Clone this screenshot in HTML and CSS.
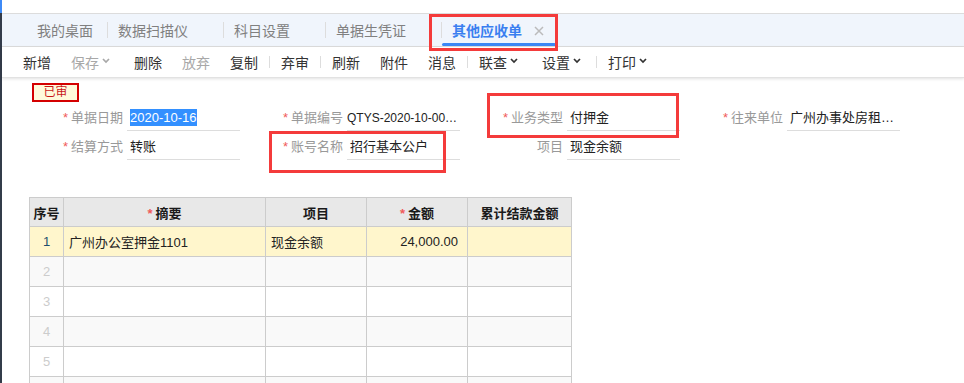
FILE: index.html
```html
<!DOCTYPE html>
<html>
  <head>
    <meta charset="utf-8" />
    <title>其他应收单</title>
    <link rel="stylesheet" href="styles.css">
  </head>
  <body>
    <div class="app">
      <div class="side"></div>
      <div class="main">
        <div class="topline"></div>

        <!-- onglets -->
        <div class="tabs">
          <div class="tab home">我的桌面</div>
          <span class="tab-sep"></span>
          <div class="tab">数据扫描仪<span class="close hidden"></span></div>
          <span class="tab-sep"></span>
          <div class="tab">科目设置<span class="close hidden"></span></div>
          <span class="tab-sep"></span>
          <div class="tab">单据生凭证<span class="close hidden"></span></div>
          <span class="tab-sep"></span>
          <div class="tab active">其他应收单<span class="close"><svg width="10" height="10" viewBox="0 0 10 10"><path d="M1 1l8 8M9 1l-8 8" /></svg></span></div>
        </div>

        <!-- barre d'outils -->
        <div class="toolbar">
          <span class="tool">新增</span>
          <span class="tool disabled drop">保存<svg width="8" height="6" viewBox="0 0 8 6"><path d="M1 1l3 3 3-3" /></svg></span>
          <span class="tool">删除</span>
          <span class="tool disabled">放弃</span>
          <span class="tool">复制</span>
          <span class="tool-sep"></span>
          <span class="tool">弃审</span>
          <span class="tool-sep"></span>
          <span class="tool">刷新</span>
          <span class="tool">附件</span>
          <span class="tool">消息</span>
          <span class="tool-sep"></span>
          <span class="tool drop">联查<svg width="8" height="6" viewBox="0 0 8 6"><path d="M1 1l3 3 3-3" /></svg></span>
          <span class="tool drop">设置<svg width="8" height="6" viewBox="0 0 8 6"><path d="M1 1l3 3 3-3" /></svg></span>
          <span class="tool-sep"></span>
          <span class="tool drop">打印<svg width="8" height="6" viewBox="0 0 8 6"><path d="M1 1l3 3 3-3" /></svg></span>
        </div>

        <div class="content">
          <div class="badge">已审</div>

          <div class="form">
            <div class="field">
              <label><i>*</i>单据日期</label>
              <div class="value"><span class="selected">2020-10-16</span></div>
            </div>
            <div class="field">
              <label><i>*</i>单据编号</label>
              <div class="value code">QTYS-2020-10-00…</div>
            </div>
            <div class="field">
              <label><i>*</i>业务类型</label>
              <div class="value">付押金</div>
            </div>
            <div class="field">
              <label><i>*</i>往来单位</label>
              <div class="value">广州办事处房租…</div>
            </div>
            <div class="field">
              <label><i>*</i>结算方式</label>
              <div class="value">转账</div>
            </div>
            <div class="field">
              <label><i>*</i>账号名称</label>
              <div class="value">招行基本公户</div>
            </div>
            <div class="field">
              <label>项目</label>
              <div class="value">现金余额</div>
            </div>
          </div>

          <table class="grid">
            <colgroup>
              <col style="width: 34px">
              <col style="width: 202px">
              <col style="width: 101px">
              <col style="width: 101px">
              <col style="width: 104px">
            </colgroup>
            <thead>
              <tr>
                <th>序号</th>
                <th><i>*</i>摘要</th>
                <th>项目</th>
                <th><i>*</i>金额</th>
                <th>累计结款金额</th>
              </tr>
            </thead>
            <tbody>
              <tr class="current">
                <td class="num">1</td>
                <td>广州办公室押金1101</td>
                <td>现金余额</td>
                <td class="amount">24,000.00</td>
                <td></td>
              </tr>
              <tr><td class="num">2</td><td></td><td></td><td></td><td></td></tr>
              <tr><td class="num">3</td><td></td><td></td><td></td><td></td></tr>
              <tr><td class="num">4</td><td></td><td></td><td></td><td></td></tr>
              <tr><td class="num">5</td><td></td><td></td><td></td><td></td></tr>
              <tr><td class="num"></td><td></td><td></td><td></td><td></td></tr>
            </tbody>
          </table>
        </div>
      </div>
    </div>

    <!-- cadres rouges d'annotation -->
    <div class="mark mark-tab"></div>
    <div class="mark mark-type"></div>
    <div class="mark mark-account"></div>
  </body>
</html>
```

FILE: styles.css
```css
html, body {
  margin: 0;
  height: 100%;
  overflow: hidden;
}

body {
  position: relative;
  background-color: #ffffff;
  font-family: "Liberation Sans", "Noto Sans CJK SC", sans-serif;
  color: #222;
}

.app {
  display: flex;
  height: 100%;
}

.side {
  width: 2px;
  flex: none;
  background: linear-gradient(#3d8af7 0, #3d8af7 13px, #333c4a 13px);
}

.main {
  flex: 1;
  min-width: 0;
}

.topline {
  height: 13px;
  border-bottom: 1px solid #dcdcdc;
}

/* onglets */
.tabs {
  display: flex;
  align-items: stretch;
  height: 32px;
  padding-left: 23px;
  background-color: #f0f5fc;
  border-bottom: 1px solid #dedede;
}

.tab {
  position: relative;
  display: flex;
  align-items: center;
  padding: 2px 13px 0 10px;
  font-size: 14px;
  line-height: 20px;
  color: #808080;
}

.tab.home {
  padding: 2px 14px 0 12px;
}

.tab.active {
  color: #3a7ff0;
  font-weight: bold;
  padding-right: 12px;
}

.tab.active::after {
  content: "";
  position: absolute;
  left: 0;
  right: 0;
  bottom: 0;
  height: 3px;
  border-radius: 2px;
  background-color: #3b87f5;
}

.close {
  display: flex;
  width: 10px;
  height: 10px;
  margin-left: 12px;
}

.close path {
  fill: none;
  stroke: #bbbbbb;
  stroke-width: 1.5;
}

.close.hidden {
  visibility: hidden;
}

.tab-sep {
  width: 1px;
  height: 16px;
  align-self: center;
  background-color: #dddddd;
}

/* barre d'outils */
.toolbar {
  display: flex;
  align-items: center;
  height: 30px;
  padding-left: 11px;
  box-shadow: 0 1px 3px rgba(0, 0, 0, 0.12);
  border-bottom: 1px solid #e2e2e2;
}

.tool {
  display: flex;
  align-items: center;
  padding: 0 10px;
  font-size: 14px;
  color: #333;
}

.tool.disabled {
  color: #a8a8a8;
}

.tool.drop {
  padding-right: 14px;
}

.tool svg {
  margin-left: 3px;
  margin-top: -2px;
}

.tool svg path {
  fill: none;
  stroke: currentColor;
  stroke-width: 1.7;
}

.tool-sep {
  width: 1px;
  height: 12px;
  margin: 0 1px;
  background-color: #dddddd;
}

/* contenu */
.content {
  padding-left: 27px;
}

.badge {
  width: 43px;
  height: 15px;
  margin: 5px 0 0 3px;
  border: 2px solid #d40000;
  background-color: #fffadb;
  color: #c81818;
  font-size: 12px;
  line-height: 15px;
  text-align: center;
}

.form {
  display: grid;
  grid-template-columns: repeat(4, 220px);
  row-gap: 4px;
  margin: 4px 0 0 -6px;
}

.field {
  display: flex;
  font-size: 13px;
}

.field label {
  width: 100px;
  height: 24px;
  line-height: 24px;
  text-align: right;
  color: #999;
}

.field i,
.grid i {
  font-style: normal;
  color: #f05a5a;
  margin-right: 3px;
}

.value {
  width: 110px;
  height: 24px;
  margin-left: 4px;
  padding-left: 3px;
  line-height: 24px;
  border-bottom: 1px solid #dddddd;
  white-space: nowrap;
  overflow: hidden;
}

.value.code {
  padding-left: 0;
  width: 113px;
  font-size: 12px;
}

.selected {
  background-color: #3390ff;
  color: #ffffff;
  padding: 1px 0;
}

/* tableau */
.grid {
  margin-top: 37px;
  border-collapse: collapse;
  table-layout: fixed;
  width: 542px;
  font-size: 13px;
}

.grid th,
.grid td {
  border: 1px solid #cccccc;
  padding: 0 5px;
  white-space: nowrap;
  overflow: hidden;
}

.grid th {
  height: 28px;
  background-color: #e8e8e8;
  font-weight: bold;
  color: #1a1a1a;
  text-align: center;
}

.grid th:first-child,
.grid td.num {
  padding: 0;
}

.grid td {
  height: 29px;
}

.grid tbody tr:nth-child(even) {
  background-color: #f9f9f9;
}

.grid tbody tr.current {
  background-color: #fff6cc;
}

.grid td.num {
  text-align: center;
  color: #cccccc;
}

.grid tr.current td.num {
  color: #1e4e6e;
}

.grid td.amount {
  text-align: right;
  padding-right: 9px;
}

/* cadres rouges */
.mark {
  position: absolute;
  box-sizing: border-box;
  border: 3px solid #f43b3b;
}

.mark-tab {
  left: 429px;
  top: 14px;
  width: 129px;
  height: 37px;
}

.mark-type {
  left: 487px;
  top: 93px;
  width: 192px;
  height: 45px;
}

.mark-account {
  left: 269px;
  top: 131px;
  width: 177px;
  height: 42px;
}
```
